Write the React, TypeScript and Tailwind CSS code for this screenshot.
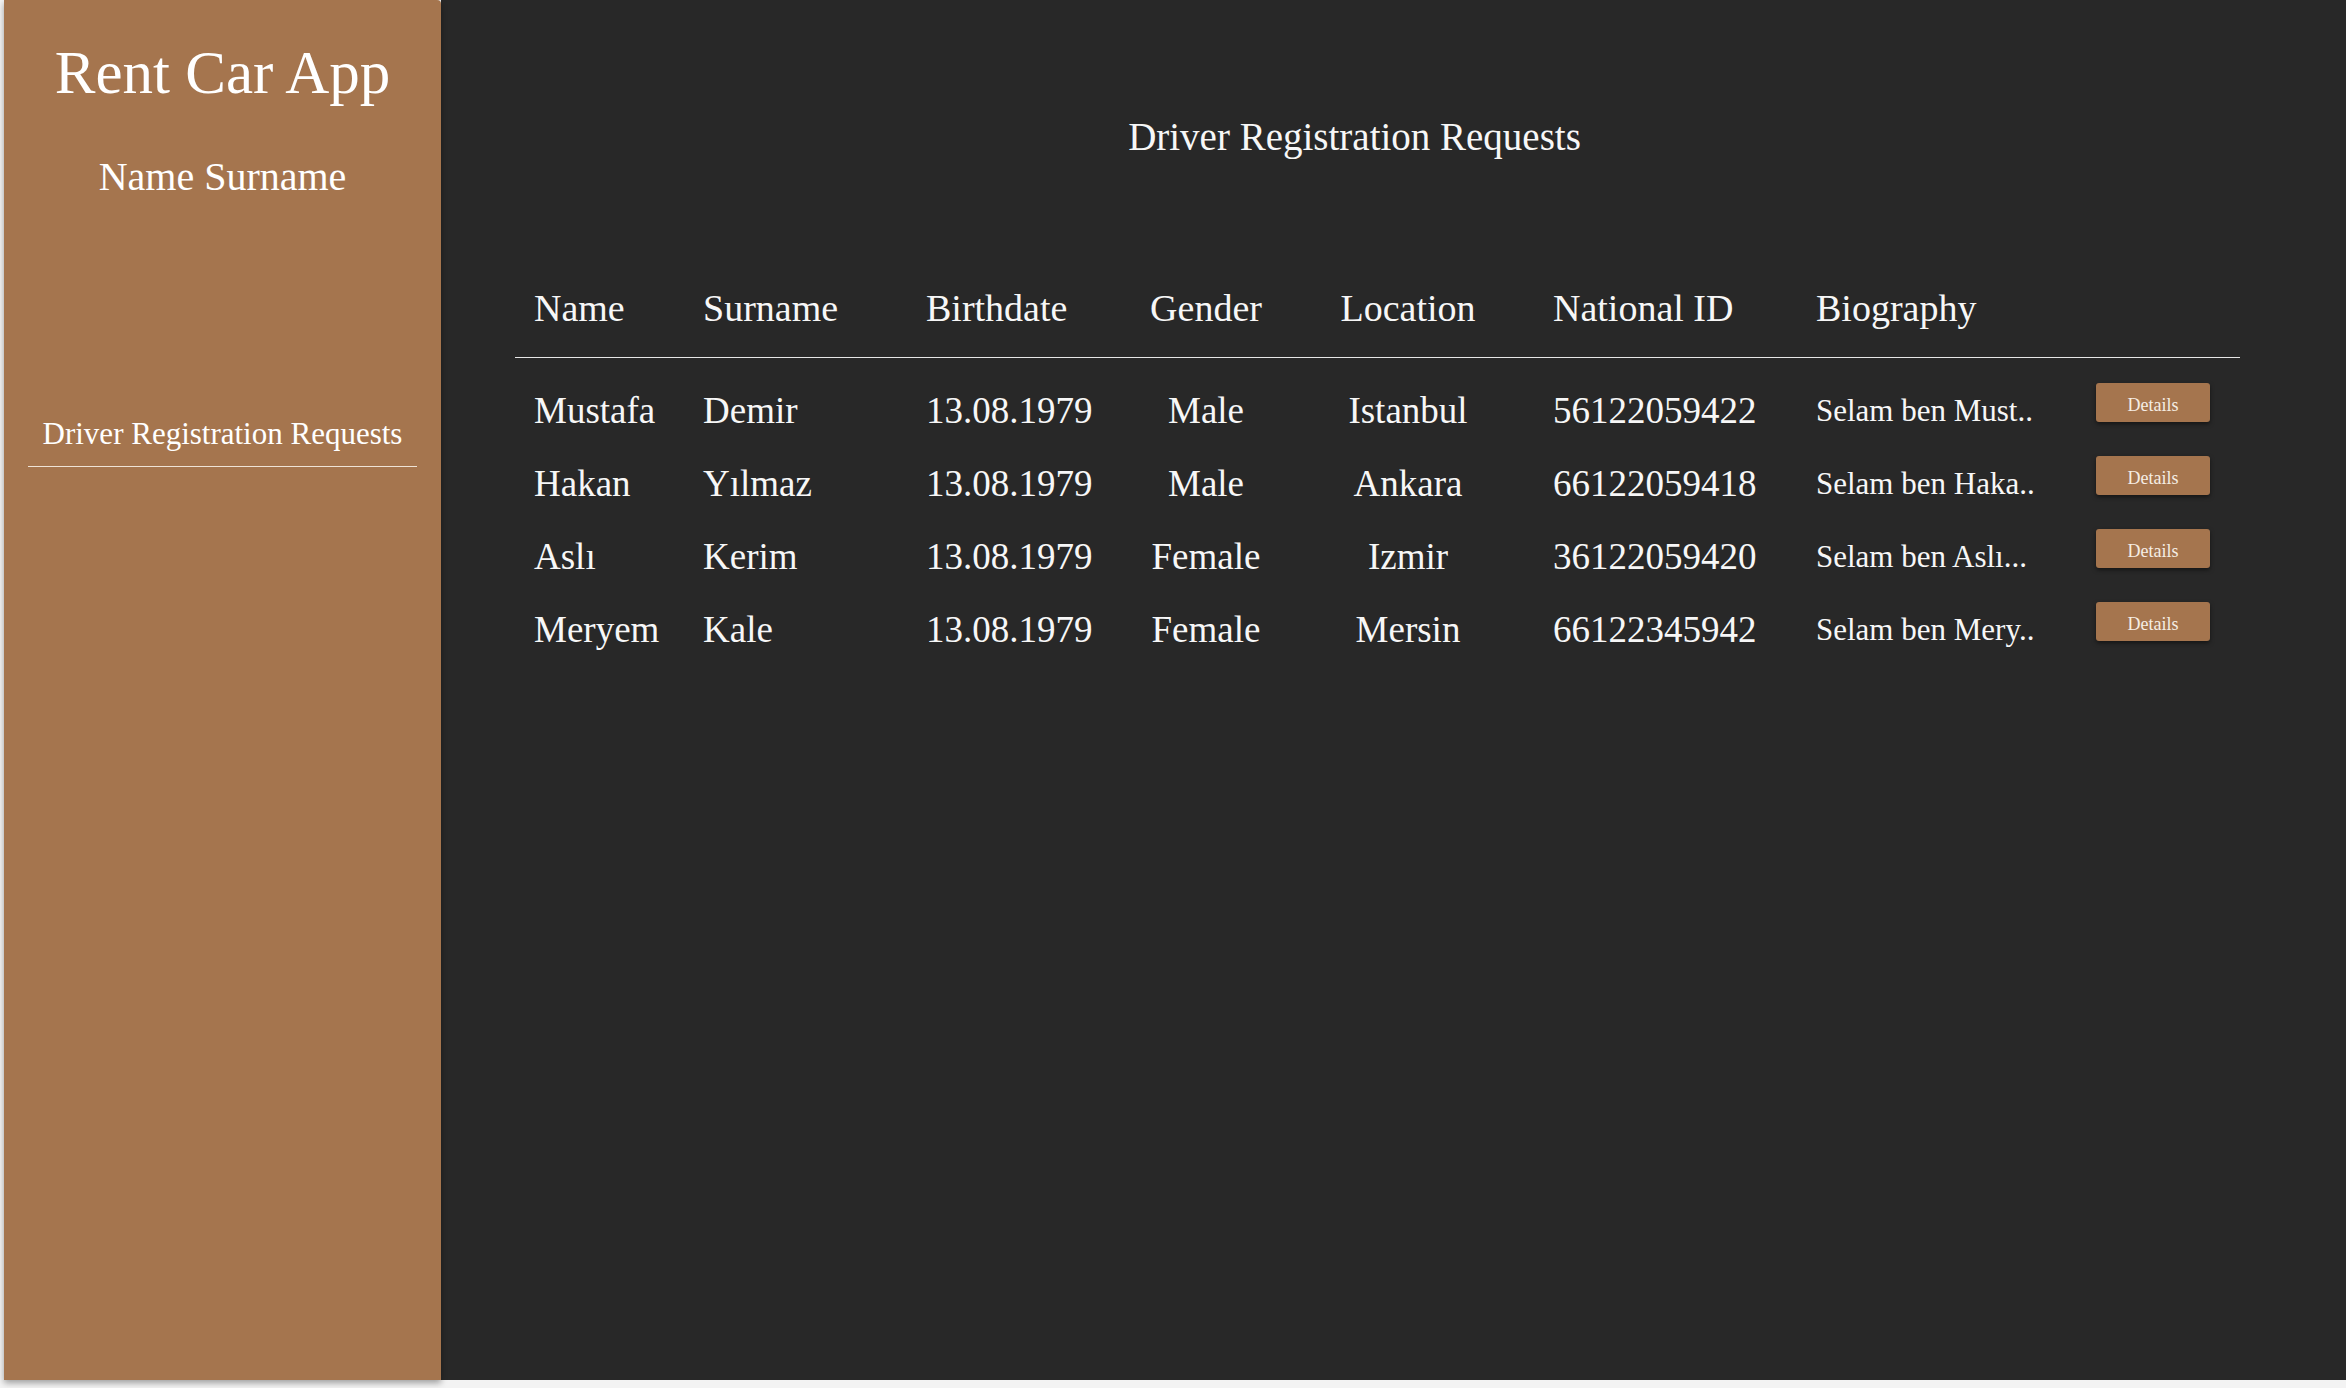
import { FC } from 'react'

interface Request {
  name: string
  surname: string
  birthdate: string
  gender: string
  location: string
  nationalId: string
  bio: string
}

const requests: Request[] = [
  { name: 'Mustafa', surname: 'Demir', birthdate: '13.08.1979', gender: 'Male', location: 'Istanbul', nationalId: '56122059422', bio: 'Selam ben Must..' },
  { name: 'Hakan', surname: 'Yılmaz', birthdate: '13.08.1979', gender: 'Male', location: 'Ankara', nationalId: '66122059418', bio: 'Selam ben Haka..' },
  { name: 'Aslı', surname: 'Kerim', birthdate: '13.08.1979', gender: 'Female', location: 'Izmir', nationalId: '36122059420', bio: 'Selam ben Aslı...' },
  { name: 'Meryem', surname: 'Kale', birthdate: '13.08.1979', gender: 'Female', location: 'Mersin', nationalId: '66122345942', bio: 'Selam ben Mery..' },
]

const cols = 'grid grid-cols-[169px_223px_194px_172px_232px_292px_280px_114px]'

const App: FC = () => {
  return (
    <div
      className="h-[1388px] w-full bg-[#f3f3f3]"
      style={{ fontFamily: '"Liberation Serif", "Times New Roman", serif' }}
    >
      <div className="flex h-[1380px] w-full">
        {/* sidebar */}
        <aside className="ml-[4px] flex w-[437px] shrink-0 flex-col items-center rounded-tr-[4px] bg-[#a5754e] pt-[38px] text-white shadow-[0_3px_6px_rgba(0,0,0,0.35)] z-10">
          <h1 className="text-[61px] leading-[70px]">Rent Car App</h1>
          <p className="mt-[46px] text-[40px] leading-[46px]">Name Surname</p>
          <div className="mt-[216px] w-[389px] border-b border-[#efe3d6] pb-[14px] text-center">
            <span className="text-[31px] leading-[36px]">Driver Registration Requests</span>
          </div>
        </aside>

        {/* main */}
        <main className="flex-1 bg-[#282828] pl-[74px] pt-[114px] text-[#f7f7f7]">
          <div className="w-[1725px]">
            <h2 className="pr-[46px] text-center text-[39px] leading-[45px]">Driver Registration Requests</h2>

            <div className="mt-[124px] border-b border-[#e6e6e6] pb-[24px] pl-[19px]">
              <div className={`${cols} text-[38px] leading-[50px]`}>
                <span>Name</span>
                <span>Surname</span>
                <span>Birthdate</span>
                <span className="text-center">Gender</span>
                <span className="text-center">Location</span>
                <span className="pl-[29px]">National ID</span>
                <span>Biography</span>
                <span></span>
              </div>
            </div>

            <div className="mt-[16px] pl-[19px]">
              {requests.map((r) => (
                <div key={r.nationalId} className={`${cols} h-[73px] items-center text-[37px] leading-[44px]`}>
                  <span>{r.name}</span>
                  <span>{r.surname}</span>
                  <span>{r.birthdate}</span>
                  <span className="text-center">{r.gender}</span>
                  <span className="text-center">{r.location}</span>
                  <span className="pl-[29px]">{r.nationalId}</span>
                  <span className="text-[31px]">{r.bio}</span>
                  <button className="-mt-[16px] h-[39px] w-[114px] rounded-[3px] bg-[#a5754e] text-[18px] text-[#f5ede4] shadow-[0_2px_4px_rgba(0,0,0,0.5)]">
                    Details
                  </button>
                </div>
              ))}
            </div>
          </div>
        </main>
      </div>
    </div>
  )
}

export default App
